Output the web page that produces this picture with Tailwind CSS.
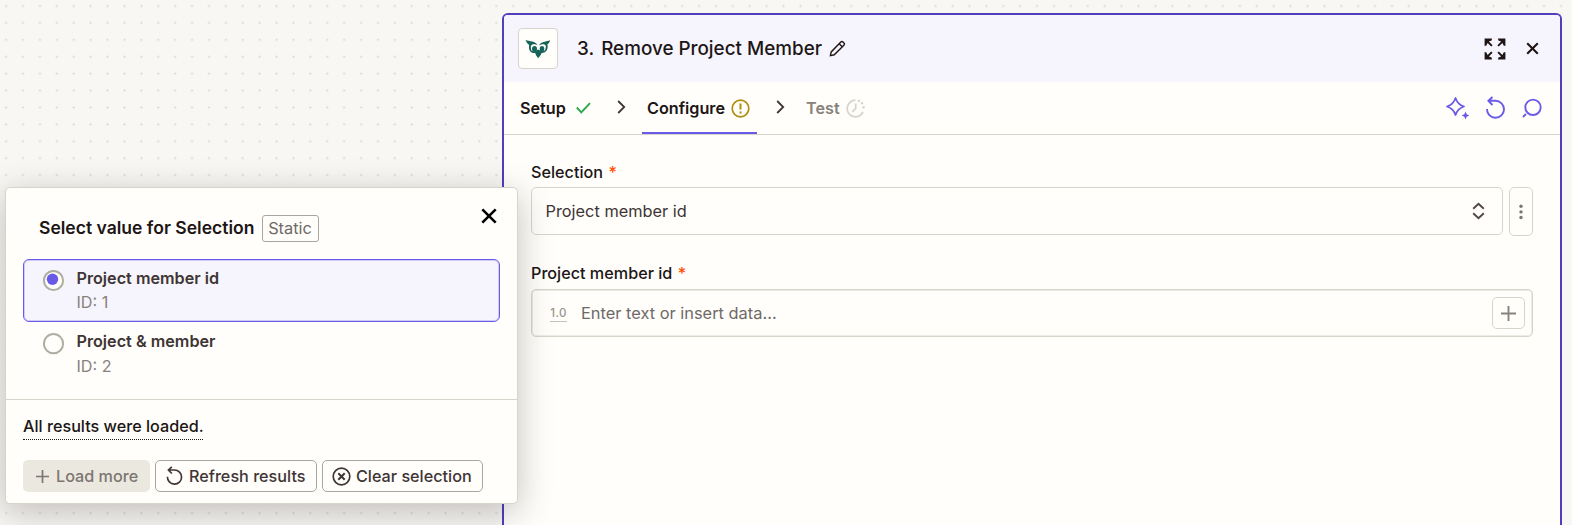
<!DOCTYPE html>
<html lang="en">
<head>
<meta charset="utf-8">
<title>Remove Project Member</title>
<script src="https://cdn.jsdelivr.net/npm/@tailwindcss/browser@4"></script>
</head>
<body class="relative h-[525px] w-[1572px] overflow-hidden bg-[#f8f7f4] font-['Inter',sans-serif] text-[16.2px] text-[#201515]">
<svg class="absolute inset-0 h-full w-full"><defs><pattern id="dots" width="16.9" height="16.9" patternUnits="userSpaceOnUse" x="-2.3" y="-2.4"><circle cx="8.45" cy="8.45" r="1.05" fill="#d5d4d0"/></pattern></defs><rect width="100%" height="100%" fill="url(#dots)"/></svg>

<main class="relative mt-[13px] ml-[502px] h-[512px] w-[1060px] overflow-hidden rounded-t-[6px] border-2 border-b-0 border-[#503ebd] bg-[#fffefb]">
  <header class="flex h-[67px] items-center bg-[#f6f5fd] pr-[21px] pl-[14px]">
    <div class="flex h-[41px] w-[40px] items-center justify-center rounded-[4px] border border-[#d7d5cb] bg-[#fffefb]">
      <svg width="26" height="20" viewBox="0 0 26 20" fill="#166358"><path d="M.5 1C4.500 2.600 10.500 1.800 12.600 6C11.500 5.900 9.300 4.700 7.300 5.500C5.700 6.200 5.600 8 6 10.200C6.300 12 7.700 12.600 9.500 12.400L11.300 11.600L13.200 10.600L15 11.600C17.500 12.900 19.900 12.300 20.500 10C21.200 7.800 21 6.200 19.500 5.600C17.500 4.900 15.500 5.800 14 6.500C15.500 2.600 21.500 2.600 25.200 1.200C24.600 3.400 23.600 4.500 22.300 5.200C23.700 9.500 21.500 14 16.700 13.900L15.500 16.200L13.200 19.200L11 16.200L10.200 13.900C6 14.700 2.800 10.500 4.300 5.900C2.500 5 1.400 3.300 .5 1Z"/><ellipse cx="9.500" cy="10" rx="2.500" ry="2.900"/><ellipse cx="17" cy="10" rx="2.300" ry="2.900"/></svg>
    </div>
    <h1 class="ml-[19px] flex items-center gap-[7px] text-[18.85px] leading-[24px] font-medium whitespace-nowrap"><span>3.</span><span>Remove Project Member</span></h1>
    <svg class="ml-[7px]" width="17" height="17" viewBox="0 0 17 17" fill="none" stroke="#201515" stroke-width="1.4"><path d="M1.4 15.6L2.2 11.9L11.8 2.1Q12.9 1 14 2.1L14.9 3Q16 4.1 14.9 5.2L5.2 14.8Z M10.2 3.8L13.2 6.8"/></svg>
    <div class="ml-auto flex items-center gap-[20px]">
      <svg width="22" height="22" viewBox="0 0 22 22" fill="#201515"><g id="arrow"><path d="M.6.6H8L7.600 2.400L4.900 3.600L8.600 7.200L7.200 8.600L3.600 4.900L2.400 7.600L.6 8Z"/></g><use href="#arrow" transform="matrix(-1 0 0 1 22 0)"/><use href="#arrow" transform="matrix(1 0 0 -1 0 22)"/><use href="#arrow" transform="matrix(-1 0 0 -1 22 22)"/></svg>
      <svg width="13" height="13" viewBox="0 0 13 13" fill="none" stroke="#201515" stroke-width="2.1"><path d="M1.2 1.2L11.8 11.8M11.8 1.2L1.2 11.8"/></svg>
    </div>
  </header>

  <nav class="flex h-[53px] border-b border-[#d7d5cb] pr-[18px] pl-[16px] font-semibold">
    <div class="flex h-[52px] w-[72px] items-center gap-[10px]"><span>Setup</span><svg class="shrink-0" width="15" height="12" viewBox="0 0 15 12" fill="none" stroke="#2ba84a" stroke-width="1.9"><path d="M.8 5.5L5.3 10.3L14 1.1"/></svg></div>
    <svg class="mt-[18px] ml-[24.500px]" width="9" height="14" viewBox="0 0 9 14" fill="none" stroke="#403535" stroke-width="1.8"><path d="M1.2 1L7.2 7L1.2 13"/></svg>
    <div class="ml-[16.500px] flex h-[52px] w-[115px] items-center gap-[6px] border-b-2 border-[#695be8] pt-[2px] pl-[5px]"><span>Configure</span><svg class="shrink-0" width="19" height="19" viewBox="0 0 19 19" fill="none" stroke="#b08d12" stroke-width="1.7"><circle cx="9.5" cy="9.5" r="8.3"/><path d="M9.5 4.5V10.6M9.5 12.4V14.4" stroke-width="2"/></svg></div>
    <svg class="mt-[18px] ml-[18.500px]" width="9" height="14" viewBox="0 0 9 14" fill="none" stroke="#403535" stroke-width="1.8"><path d="M1.2 1L7.2 7L1.2 13"/></svg>
    <div class="ml-[21.500px] flex h-[52px] items-center gap-[6px] text-[#88827e]"><span>Test</span><svg width="19" height="19" viewBox="0 0 19 19" fill="none" stroke="#d7d5cb" stroke-width="1.8"><path d="M9.5 1.2A8.300 8.300 0 1 0 17 13"/><path d="M9.7 4.5V9.5L6.3 12.9"/><g fill="#d7d5cb" stroke="none"><circle cx="12.900" cy="1.900" r="1.200"/><circle cx="16" cy="4.300" r="1.200"/><circle cx="17.600" cy="8.300" r="1.200"/></g></svg></div>
    <div class="ml-auto flex h-[52px] items-center gap-[16px]">
      <svg width="24" height="24" viewBox="0 0 24 24" fill="none" stroke="#695be8" stroke-width="1.8"><path d="M9.500 2C11 6.800 13.200 9 18 10.500C13.200 12 11 14.200 9.500 19C8 14.200 5.800 12 1 10.500C5.800 9 8 6.800 9.500 2Z" stroke-linejoin="round"/><path d="M19.500 15.500L20.700 18.300L23.400 19.500L20.700 20.700L19.500 23.500L18.300 20.700L15.600 19.500L18.300 18.300Z" fill="#695be8" stroke="none"/></svg>
      <svg width="20" height="24" viewBox="0 0 20 24" fill="none" stroke="#695be8" stroke-width="1.9"><path d="M1 13A8.500 8.500 0 1 0 9.500 4.800H2M6.500 1L2.400 4.800L6.500 9"/></svg>
      <svg width="20" height="24" viewBox="0 0 20 24" fill="none" stroke="#695be8" stroke-width="1.9"><circle cx="11" cy="11.300" r="7.7"/><path d="M1 21L4 18"/></svg>
    </div>
  </nav>

  <section class="pr-[27px] pl-[27px]">
    <label class="mt-[27px] flex h-[20px] gap-[5.500px] leading-[21px] font-medium"><span>Selection</span><span class="text-[#ff4f00]">*</span></label>
    <div class="mt-[5px] flex items-start gap-[6px]">
      <div class="flex h-[48px] grow items-center justify-between rounded-[5px] border border-[#d7d5cb] pr-[17px] pl-[13.500px] text-[16.35px] text-[#403535]"><span class="pt-px">Project member id</span><svg width="13" height="18" viewBox="0 0 13 18" fill="none" stroke="#504646" stroke-width="1.9"><path d="M1.2 6.7L6.5 1.7L11.8 6.7M1.2 11.3L6.5 16.3L11.8 11.3"/></svg></div>
      <div class="flex h-[49px] w-[24px] items-center justify-center rounded-[5px] border border-[#d7d5cb] pr-px"><svg width="4" height="16" viewBox="0 0 4 16" fill="#7d7572"><circle cx="2" cy="2.3" r="1.7"/><circle cx="2" cy="7.9" r="1.7"/><circle cx="2" cy="13.5" r="1.7"/></svg></div>
    </div>
    <label class="mt-[27px] flex h-[20px] gap-[5.500px] leading-[21px] font-medium"><span>Project member id</span><span class="text-[#ff4f00]">*</span></label>
    <div class="mt-[6px] flex h-[48px] items-center rounded-[5px] border border-[#d7d5cb] pr-[7px] pl-[18px] shadow-[inset_0_0_0_1px_#ecebe4]">
      <span class="mt-[2px] h-[16px] w-[17px] border-b border-[#c5c2ba] text-center text-[11.5px] leading-[15px] font-medium tracking-[0.3px] text-[#99948e]">1.0</span>
      <span class="ml-[14px] pt-px text-[16.4px] text-[#6f6966]">Enter text or insert data...</span>
      <div class="ml-auto flex h-[32px] w-[33px] items-center justify-center rounded-[5px] border border-[#d7d5cb]"><svg width="15" height="15" viewBox="0 0 15 15" stroke="#88827e" stroke-width="1.9"><path d="M7.5 0V15M0 7.5H15"/></svg></div>
    </div>
  </section>
</main>

<aside class="absolute top-[187px] left-[5px] flex h-[317px] w-[513px] flex-col rounded-[5px] border border-[#d7d5cb] bg-[#fffefb] shadow-[0_8px_34px_rgba(32,21,21,0.26)]">
  <div class="flex h-[71px] items-start pr-[20px] pl-[33px]">
    <h2 class="mt-[28px] w-[215px] text-[17.55px] leading-[24px] font-semibold whitespace-nowrap">Select value for Selection</h2>
    <span class="mt-[27px] ml-[8px] flex h-[27px] w-[57px] items-center justify-center rounded-[3px] border border-[#a8a6a0] pr-px pb-px text-[16.35px] text-[#6f6966]">Static</span>
    <svg class="mt-[20px] ml-auto" width="16" height="16" viewBox="0 0 16 16" fill="none" stroke="#000" stroke-width="2.6"><path d="M1.3 1.3L14.7 14.7M14.7 1.3L1.3 14.7"/></svg>
  </div>
  <div class="ml-[17px] flex h-[63px] w-[477px] rounded-[6px] border border-[#695be8] bg-[#f6f5fd] pl-[19px] shadow-[inset_0_0_0_1px_#cfcaf7]">
    <svg class="mt-[10px]" width="22" height="22" viewBox="0 0 22 22"><circle cx="10.5" cy="10.5" r="9.6" fill="#fffefb" stroke="#b0aea2" stroke-width="2"/><circle cx="9.5" cy="9.3" r="5.7" fill="#695be8"/></svg>
    <div class="ml-[11.500px] pt-[6px] leading-[24px] text-[#403535]"><div class="font-semibold">Project member id</div><div class="text-[#88827e]">ID: 1</div></div>
  </div>
  <div class="ml-[17px] flex h-[77px] w-[477px] pl-[20px]">
    <svg class="mt-[11px]" width="22" height="22" viewBox="0 0 22 22"><circle cx="10.5" cy="10.7" r="9.6" fill="#fffefb" stroke="#b0aea2" stroke-width="2"/></svg>
    <div class="ml-[11.500px] pt-[7px] leading-[24px] text-[#403535]"><div class="font-semibold">Project &amp; member</div><div class="pt-px text-[#88827e]">ID: 2</div></div>
  </div>
  <footer class="grow border-t border-[#d7d5cb] pl-[17px]">
    <span class="mt-[16px] block h-[24px] w-[180px] border-b border-dotted border-[#201515] leading-[20px] font-medium whitespace-nowrap">All results were loaded.</span>
    <div class="mt-[20px] flex gap-[5px] font-medium whitespace-nowrap text-[#403535]">
      <div class="flex h-[32px] w-[127px] items-center gap-[7px] rounded-[5px] bg-[#ebe9df] pl-[13px] text-[#7d7572]"><svg width="13" height="13" viewBox="0 0 13 13" stroke="currentColor" stroke-width="1.7"><path d="M6.5 0V13M0 6.5H13"/></svg><span class="pt-px">Load more</span></div>
      <div class="flex h-[32px] w-[162px] items-center gap-[6px] rounded-[5px] border border-[#a8a6a0] pl-[10px]"><svg class="-mt-px" width="17" height="20" viewBox="0 0 20 24" fill="none" stroke="currentColor" stroke-width="2"><path d="M1.5 13A8.5 8.5 0 1 0 10 4.8H2.2M6.8 1L2.7 4.8L6.8 9"/></svg><span class="pt-px">Refresh results</span></div>
      <div class="flex h-[32px] w-[161px] items-center gap-[5px] rounded-[5px] border border-[#a8a6a0] pl-[9px]"><svg width="19" height="19" viewBox="0 0 19 19" fill="none" stroke="currentColor" stroke-width="1.7"><circle cx="9.5" cy="9.5" r="8.3"/><path d="M6.3 6.3L12.7 12.7M12.7 6.3L6.3 12.7" stroke-width="2"/></svg><span class="pt-px">Clear selection</span></div>
    </div>
  </footer>
</aside>
</body>
</html>
